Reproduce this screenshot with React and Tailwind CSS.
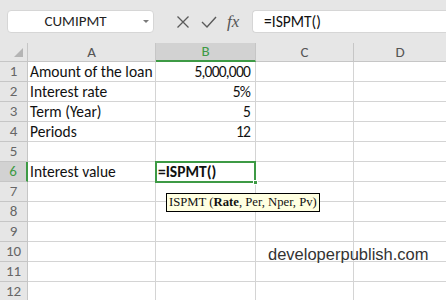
import React from "react";

const rows = [
  ["Amount of the loan", "5,000,000"],
  ["Interest rate", "5%"],
  ["Term (Year)", "5"],
  ["Periods", "12"],
  ["", ""],
  ["Interest value", ""],
  ["", ""],
  ["", ""],
  ["", ""],
  ["", ""],
  ["", ""],
  ["", ""],
];

const font = { fontFamily: "Carlito, Lato, sans-serif" };

export default function App() {
  return (
    <div className="w-[446px] h-[300px] overflow-hidden bg-white relative" style={font}>
      {/* formula bar */}
      <div className="h-[43px] bg-[#e6e6e6] flex items-center">
        <div className="ml-[7px] w-[147px] h-[23px] bg-white rounded-[4px] border border-[#d6d6d6] relative flex items-center justify-center text-[15px] text-[#222]">
          <span className="mr-[10px]">CUMIPMT</span>
          <span className="absolute right-[4px] top-[9px] w-0 h-0 border-l-[3px] border-r-[3px] border-t-[3px] border-l-transparent border-r-transparent border-t-[#7a7a7a]"></span>
        </div>
        <div className="w-[98px] flex items-center">
          <svg className="ml-[22px]" width="14" height="14" viewBox="0 0 14 14">
            <path d="M1.5 1.5 L12.5 12.5 M12.5 1.5 L1.5 12.5" stroke="#5a5a5a" strokeWidth="1.3" fill="none" />
          </svg>
          <svg className="ml-[11px]" width="16" height="14" viewBox="0 0 16 14">
            <path d="M1 7 L6 12 L15 2" stroke="#5a5a5a" strokeWidth="1.4" fill="none" />
          </svg>
          <span className="ml-[10px] text-[17px] italic text-[#555] leading-none" style={{ fontFamily: "'Liberation Serif', serif" }}>fx</span>
        </div>
        <div className="flex-1 h-[23px] bg-white rounded-l-[4px] border border-r-0 border-[#d6d6d6] flex items-center pl-[11px] text-[15.5px] text-[#111]">
          =ISPMT()
        </div>
      </div>

      {/* grid */}
      <div className="grid grid-cols-[28px_128px_100px_98px_1fr]">
        <div className="h-[19px] bg-[#e6e6e6] border-r border-b border-[#c6c6c6] relative">
          <span className="absolute right-[4px] bottom-[4px] w-0 h-0" style={{ borderBottom: "9px solid #b4b4b4", borderLeft: "9px solid transparent" }}></span>
        </div>
        <div className="h-[19px] bg-[#e6e6e6] border-r border-b border-[#c6c6c6] flex items-center justify-center text-[15px] text-[#555]">A</div>
        <div className="h-[19px] bg-[#d2d2d2] border-r border-b-2 border-r-[#c6c6c6] border-b-[#3d9a45] flex items-center justify-center text-[15px] text-[#3d9a45]">B</div>
        <div className="h-[19px] bg-[#e6e6e6] border-r border-b border-[#c6c6c6] flex items-center justify-center text-[15px] text-[#555]">C</div>
        <div className="h-[19px] bg-[#e6e6e6] border-b border-[#c6c6c6] flex items-center justify-center text-[15px] text-[#555]">D</div>

        {rows.map((r, i) => {
          const sel = i === 5;
          return (
            <React.Fragment key={i}>
              <div
                className={
                  sel
                    ? "h-[20px] bg-[#d2d2d2] border-r-2 border-b border-r-[#3d9a45] border-b-[#c6c6c6] flex items-center justify-center text-[15px] text-[#3d9a45]"
                    : "h-[20px] bg-[#e6e6e6] border-r border-b border-[#c6c6c6] flex items-center justify-center text-[15px] text-[#666]"
                }
              >
                {i + 1}
              </div>
              <div className="h-[20px] border-r border-b border-[#d4d4d4] flex items-center pl-[2px] text-[15.5px] text-[#111] whitespace-nowrap">{r[0]}</div>
              <div className="h-[20px] border-r border-b border-[#d4d4d4] flex items-center justify-end pr-[5px] text-[15.5px] tracking-[-0.8px] text-[#111]">{r[1]}</div>
              <div className="h-[20px] border-r border-b border-[#d4d4d4]"></div>
              <div className="h-[20px] border-b border-[#d4d4d4]"></div>
            </React.Fragment>
          );
        })}
      </div>

      {/* selection box on B6 */}
      <div className="absolute left-[155px] top-[161px] w-[101px] h-[22px] border-2 border-[#3d9a45] flex items-center pl-[1px] text-[15.5px] font-bold text-[#111]">
        =ISPMT()
        <span className="absolute right-[-4px] bottom-[-4px] w-[5px] h-[5px] bg-[#3d9a45] border border-white"></span>
      </div>

      {/* tooltip */}
      <div
        className="absolute left-[166px] top-[193px] h-[19px] bg-[#ffffe1] border border-black flex items-center px-[2px] text-[12.7px] text-[#111] whitespace-nowrap"
        style={{ fontFamily: "'Liberation Serif', 'Times New Roman', serif" }}
      >
        ISPMT (<b>Rate</b>, Per, Nper, Pv)
      </div>

      {/* watermark */}
      <div
        className="absolute left-[268px] top-[242px] text-[16.5px] text-[#333] whitespace-nowrap"
        style={{ fontFamily: "'Liberation Sans', Arial, sans-serif" }}
      >
        developerpublish.com
      </div>
    </div>
  );
}
